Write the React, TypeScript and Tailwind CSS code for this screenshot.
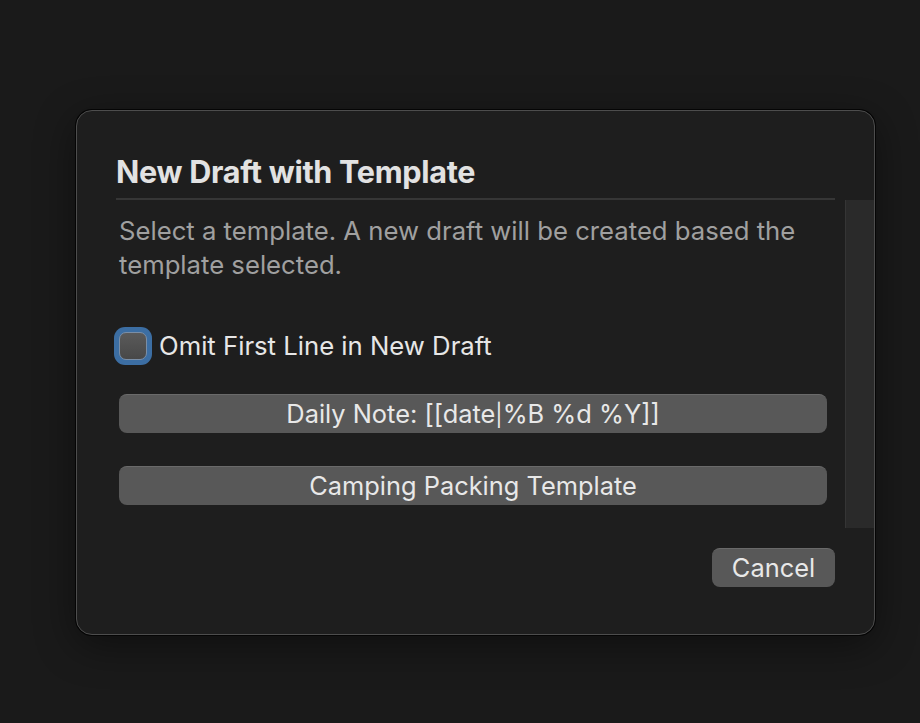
import React from "react";

export default function App() {
  return (
    <div
      className="w-[920px] h-[723px] bg-[#1a1a1a] pl-[76px] pt-[110px]"
      style={{ fontFamily: "Inter, 'Noto Sans', sans-serif" }}
    >
      <div className="w-[799px] h-[525px] rounded-[16px] bg-[#1e1e1e] border border-[#4d4d4d] shadow-[0_0_0_1px_#050505,0_10px_40px_rgba(0,0,0,0.45)] flex flex-col overflow-hidden">
        <div className="pl-[39px] pr-[39px] pt-[42px]">
          <div className="text-[30.6px] leading-[38px] font-bold text-[#e2e2e2] tracking-[-0.3px]">
            New Draft with Template
          </div>
          <div className="mt-[7px] h-[2px] bg-[#363636]" />
        </div>
        <div className="flex h-[328px]">
          <div className="flex-1 pl-[42px] pr-[18px] pt-[14px]">
            <p className="text-[25.7px] leading-[34px] text-[#a0a0a0]">
              Select a template. A new draft will be created based the template selected.
            </p>
            <label className="mt-[45px] flex items-center gap-[7px]">
              <span className="w-[38px] h-[38px] -ml-[5px] rounded-[11px] bg-[#3c6ea3] flex items-center justify-center">
                <span className="w-[28px] h-[28px] rounded-[7px] border border-[#7a8ea6] bg-gradient-to-b from-[#5a5a5a] to-[#484848]" />
              </span>
              <span className="text-[25.7px] leading-[34px] text-[#e6e6e6]">
                Omit First Line in New Draft
              </span>
            </label>
            <div className="mt-[29px] flex flex-col gap-[33px]">
              <button className="h-[39px] w-full rounded-[8px] bg-[#585858] border-t border-[#6a6a6a] text-[25.4px] text-[#e8e8e8] leading-[36px]">
                Daily Note: [[date<span className="text-[22px]">|</span>%B %d %Y]]
              </button>
              <button className="h-[39px] w-full rounded-[8px] bg-[#585858] border-t border-[#6a6a6a] text-[25.4px] text-[#e8e8e8] leading-[36px]">
                Camping Packing Template
              </button>
            </div>
          </div>
          <div className="w-[29px] h-full bg-[#2a2a2a] border-l border-[#353535]" />
        </div>
        <div className="flex justify-end pr-[39px] pt-[20px]">
          <button className="h-[39px] w-[123px] rounded-[8px] bg-[#585858] border-t border-[#6a6a6a] text-[25.4px] text-[#e8e8e8] leading-[36px]">
            Cancel
          </button>
        </div>
      </div>
    </div>
  );
}
